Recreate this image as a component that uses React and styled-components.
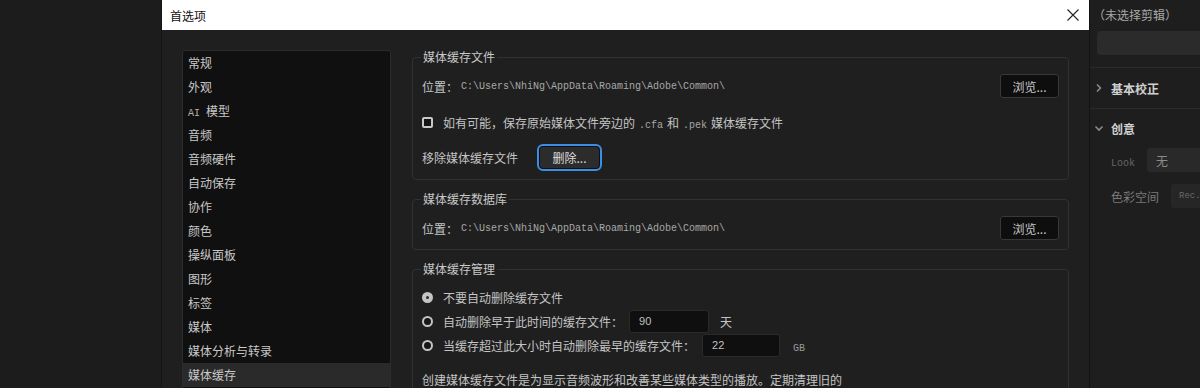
import React from 'react';
import styled, { createGlobalStyle } from 'styled-components';

const CJK = `"Noto Sans CJK SC", "Microsoft YaHei", sans-serif`;
const MONO = `"Liberation Mono", "Noto Sans CJK SC", monospace`;

const Global = createGlobalStyle`
  html, body { margin: 0; padding: 0; background: #1b1b1b; overflow: hidden; }
  body { font-family: ${CJK}; font-size: 12px; color: #c4c4c4; }
  * { box-sizing: border-box; }
`;

const Screen = styled.div`
  display: flex;
  height: 388px;
  overflow: hidden;
  background: #1b1b1b;
`;

const Backdrop = styled.div`
  width: 161px;
  flex: none;
  background: #1c1c1c;
`;

const Dialog = styled.div`
  width: 928px;
  flex: none;
  display: flex;
  flex-direction: column;
  background: #1f1f1f;
  border-left: 1px solid #151515;
`;

const TitleBar = styled.div`
  height: 30px;
  flex: none;
  background: #ffffff;
  display: flex;
  align-items: center;
  justify-content: space-between;
  padding: 0 10px 0 8px;
  color: #111;
  font-size: 12px;
`;

const CloseIcon = styled.svg`
  width: 12px;
  height: 12px;
  display: block;
`;

const Body = styled.div`
  display: grid;
  grid-template-columns: 209px 657px;
  column-gap: 21px;
  padding: 19px 0 0 20px;
  align-items: start;
`;

const NavList = styled.div`
  margin-top: 1px;
  height: 400px;
  background: #101010;
  border: 1px solid #2c2c2c;
  border-radius: 3px;
  display: flex;
  flex-direction: column;
`;

const NavItem = styled.div`
  height: 24px;
  line-height: 24px;
  padding-left: 5px;
  color: #c8c8c8;
  white-space: nowrap;
  background: ${p => (p.$active ? '#2a2a2a' : 'transparent')};
`;

const Mono = styled.span`
  font-family: ${MONO};
  font-size: ${p => p.$size || 10}px;
  color: ${p => p.$color || '#a8a8a8'};
  margin: 0 ${p => p.$mx || 0}px;
`;

const Content = styled.div`
  display: flex;
  flex-direction: column;
`;

const Group = styled.fieldset`
  margin: ${p => p.$mt || 0}px 0 0;
  padding: ${p => p.$pt}px 9px ${p => p.$pb}px;
  border: 1px solid #313131;
  border-radius: 4px;
  min-width: 0;
`;

const Legend = styled.legend`
  padding: 0 2px;
  margin-left: -1px;
  line-height: 16px;
  font-size: 12px;
  color: #c8c8c8;
`;

const Row = styled.div`
  display: flex;
  align-items: center;
  height: ${p => p.$h || 24}px;
  margin-top: ${p => p.$mt || 0}px;
  justify-content: ${p => (p.$spread ? 'space-between' : 'flex-start')};
  white-space: nowrap;
`;

const PathLabel = styled.span`
  display: flex;
  align-items: center;
  gap: 3px;
`;

const BrowseButton = styled.button`
  width: 59px;
  height: 24px;
  background: #0e0e0e;
  border: 1px solid #383838;
  border-radius: 3px;
  color: #c8c8c8;
  font-family: ${CJK};
  font-size: 12px;
  padding: 0;
`;

const Checkbox = styled.span`
  width: 11px;
  height: 11px;
  border: 2px solid #c8c8c8;
  border-radius: 2px;
  background: #141414;
  margin-right: 10px;
  flex: none;
`;

const DeleteButton = styled.button`
  width: 65px;
  height: 27px;
  margin-left: 19px;
  border: 2px solid #3a8ee6;
  border-radius: 6px;
  background: #2c2c2c;
  box-shadow: inset 0 0 0 1px #0e0e0e;
  color: #dcdcdc;
  font-family: ${CJK};
  font-size: 12px;
  padding: 0;
`;

const Radio = styled.span`
  width: 11px;
  height: 11px;
  border-radius: 50%;
  flex: none;
  margin-right: 10px;
  border: 2px solid #c4c4c4;
  background: ${p => (p.$checked ? '#c4c4c4' : '#161616')};
  display: flex;
  align-items: center;
  justify-content: center;
  &::after {
    content: '';
    width: 3px;
    height: 3px;
    border-radius: 50%;
    background: ${p => (p.$checked ? '#2a2a2a' : 'transparent')};
  }
`;

const NumberBox = styled.div`
  width: ${p => p.$w || 80}px;
  height: 23px;
  margin-left: ${p => p.$ml || 6}px;
  background: #0f0f0f;
  border: 1px solid #2a2a2a;
  border-radius: 3px;
  padding-left: 9px;
  display: flex;
  align-items: center;
  font-family: "Liberation Sans", sans-serif;
  font-size: 11px;
  color: #c0c0c0;
`;

const Unit = styled.span`
  margin-left: ${p => p.$ml || 11}px;
`;

const Note = styled.div`
  margin-top: 15px;
  line-height: 16px;
  white-space: nowrap;
`;

const Side = styled.div`
  flex: 1;
  background: #1e1e1e;
  border-left: 1px solid #121212;
  display: flex;
  flex-direction: column;
  overflow: hidden;
`;

const ClipLabel = styled.div`
  height: 30px;
  line-height: 30px;
  padding-left: 3px;
  color: #a8a8a8;
  white-space: nowrap;
`;

const ClipInput = styled.div`
  margin: 1px 0 0 7px;
  height: 24px;
  background: #2b2b2b;
  border-radius: 4px 0 0 4px;
`;

const Divider = styled.div`
  height: 1px;
  background: #2b2b2b;
  margin-top: ${p => p.$mt || 0}px;
`;

const SectionRow = styled.div`
  height: ${p => p.$h}px;
  display: flex;
  align-items: center;
  padding-left: 4px;
  font-weight: 700;
  color: #d0d0d0;
  white-space: nowrap;
`;

const Chevron = styled.svg`
  width: 10px;
  height: 10px;
  margin-right: 7px;
  flex: none;
`;

const PropRow = styled.div`
  display: flex;
  align-items: center;
  height: 24px;
  margin-top: ${p => p.$mt || 0}px;
  padding-left: 21px;
  white-space: nowrap;
`;

const PropLabel = styled.span`
  width: ${p => p.$w}px;
  flex: none;
  color: #7a7a7a;
`;

const PropBox = styled.div`
  flex: 1;
  height: 24px;
  background: ${p => p.$bg};
  border-radius: 3px 0 0 3px;
  display: flex;
  align-items: center;
  padding-left: ${p => p.$pl}px;
  color: #8a8a8a;
`;

const navItems = [
  '常规', '外观', 'AI', '音频', '音频硬件', '自动保存', '协作', '颜色',
  '操纵面板', '图形', '标签', '媒体', '媒体分析与转录', '媒体缓存',
];

const PATH = 'C:\\Users\\NhiNg\\AppData\\Roaming\\Adobe\\Common\\';

export default function App() {
  return (
    <>
      <Global />
      <Screen>
        <Backdrop />
        <Dialog>
          <TitleBar>
            <span>首选项</span>
            <CloseIcon viewBox="0 0 12 12">
              <path d="M0.5 0.5 L11.5 11.5 M11.5 0.5 L0.5 11.5" stroke="#222" strokeWidth="1.1" fill="none" />
            </CloseIcon>
          </TitleBar>
          <Body>
            <NavList>
              {navItems.map(item => (
                <NavItem key={item} $active={item === '媒体缓存'}>
                  {item === 'AI' ? (
                    <>
                      <Mono $size={10} $color="#b0b0b0" $mx={0}>AI</Mono>
                      <Mono $size={10} $mx={0}> </Mono>模型
                    </>
                  ) : item}
                </NavItem>
              ))}
            </NavList>
            <Content>
              <Group $pt={9} $pb={8}>
                <Legend>媒体缓存文件</Legend>
                <Row $spread>
                  <PathLabel>位置：<Mono>{PATH}</Mono></PathLabel>
                  <BrowseButton>浏览...</BrowseButton>
                </Row>
                <Row $h={20} $mt={14}>
                  <Checkbox />
                  <span>
                    如有可能，保存原始媒体文件旁边的<Mono $mx={4}>.cfa</Mono>和<Mono $mx={4}>.pek</Mono>媒体缓存文件
                  </span>
                </Row>
                <Row $h={27} $mt={12}>
                  <span>移除媒体缓存文件</span>
                  <DeleteButton>删除...</DeleteButton>
                </Row>
              </Group>
              <Group $mt={11} $pt={9} $pb={9}>
                <Legend>媒体缓存数据库</Legend>
                <Row $spread>
                  <PathLabel>位置：<Mono>{PATH}</Mono></PathLabel>
                  <BrowseButton>浏览...</BrowseButton>
                </Row>
              </Group>
              <Group $mt={11} $pt={8} $pb={20}>
                <Legend>媒体缓存管理</Legend>
                <Row>
                  <Radio $checked />
                  <span>不要自动删除缓存文件</span>
                </Row>
                <Row>
                  <Radio />
                  <span>自动删除早于此时间的缓存文件：</span>
                  <NumberBox $w={80} $ml={6}>90</NumberBox>
                  <Unit $ml={11}>天</Unit>
                </Row>
                <Row>
                  <Radio />
                  <span>当缓存超过此大小时自动删除最早的缓存文件：</span>
                  <NumberBox $w={78} $ml={7}>22</NumberBox>
                  <Unit $ml={13}><Mono $color="#9a9a9a">GB</Mono></Unit>
                </Row>
                <Note>创建媒体缓存文件是为显示音频波形和改善某些媒体类型的播放。定期清理旧的</Note>
              </Group>
            </Content>
          </Body>
        </Dialog>
        <Side>
          <ClipLabel>（未选择剪辑）</ClipLabel>
          <ClipInput />
          <Divider $mt={12} />
          <SectionRow $h={40}>
            <Chevron viewBox="0 0 10 10">
              <path d="M3 1.5 L6.5 5 L3 8.5" stroke="#8a8a8a" strokeWidth="1.6" fill="none" />
            </Chevron>
            基本校正
          </SectionRow>
          <Divider />
          <SectionRow $h={38}>
            <Chevron viewBox="0 0 10 10">
              <path d="M1.5 3.5 L5 7 L8.5 3.5" stroke="#8a8a8a" strokeWidth="1.6" fill="none" />
            </Chevron>
            创意
          </SectionRow>
          <PropRow $mt={1}>
            <PropLabel $w={36}><Mono $color="#666">Look</Mono></PropLabel>
            <PropBox $bg="#292929" $pl={9}>无</PropBox>
          </PropRow>
          <PropRow $mt={12}>
            <PropLabel $w={60}>色彩空间</PropLabel>
            <PropBox $bg="#262626" $pl={8}><Mono $size={9} $color="#6a6a6a">Rec.</Mono></PropBox>
          </PropRow>
        </Side>
      </Screen>
    </>
  );
}
